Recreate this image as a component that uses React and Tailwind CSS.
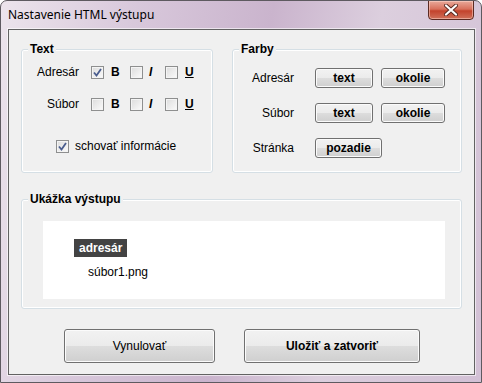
import React from "react";

function CheckBox({ checked }) {
  return (
    <div className="w-[13px] h-[13px] border border-[#8e8f8f] bg-gradient-to-br from-[#dcdcdc] to-[#fbfbfb] flex items-center justify-center shrink-0">
      <div className="w-[11px] h-[11px] border border-[#f4f4f4] flex items-center justify-center">
        {checked && (
          <svg width="9" height="9" viewBox="0 0 9 9">
            <path d="M1 4.5 L3.5 7.5 L8 1" fill="none" stroke="#4a5d8e" strokeWidth="1.8" />
          </svg>
        )}
      </div>
    </div>
  );
}

function Btn({ children, className = "", bold = true }) {
  return (
    <div
      className={`border border-[#707070] rounded-[3px] flex items-center justify-center text-[12px] text-black shadow-[inset_0_0_0_1px_#fbfbfb] bg-[linear-gradient(to_bottom,#f2f2f2_0%,#ebebeb_50%,#dddddd_51%,#cfcfcf_100%)] ${bold ? "font-bold" : ""} ${className}`}
    >
      {children}
    </div>
  );
}

function Group({ title, className = "", children }) {
  return (
    <div className={`relative border border-[#d5dfe5] rounded-[3px] shadow-[inset_0_0_0_1px_#ffffff] ${className}`}>
      <span className="absolute -top-[8px] left-[6px] px-[2px] bg-[#f0f0f0] text-[12px] leading-[14px] font-bold text-black">
        {title}
      </span>
      {children}
    </div>
  );
}

function StyleRow({ label, checks }) {
  return (
    <div className="flex items-center h-[16px]">
      <span className="w-[57px] text-right">{label}</span>
      <div className="flex items-center ml-[12px] w-[39px]">
        <CheckBox checked={checks[0]} />
        <span className="ml-[7px] font-bold">B</span>
      </div>
      <div className="flex items-center w-[35px]">
        <CheckBox checked={checks[1]} />
        <span className="ml-[6px] font-bold italic">I</span>
      </div>
      <div className="flex items-center">
        <CheckBox checked={checks[2]} />
        <span className="ml-[7px] font-bold underline">U</span>
      </div>
    </div>
  );
}

function ColorRow({ label, buttons }) {
  return (
    <div className="flex items-center h-[20px]">
      <span className="w-[61px] text-right">{label}</span>
      <div className="flex ml-[21px] gap-[8px]">
        {buttons.map((b) => (
          <Btn key={b.t} className={`h-[20px] ${b.w}`}>{b.t}</Btn>
        ))}
      </div>
    </div>
  );
}

export default function App() {
  return (
    <div className="w-[482px] h-[383px] flex flex-col border border-[#5e5a60] rounded-t-[7px] overflow-hidden bg-[linear-gradient(100deg,#ece4ec_0%,#d8c8db_25%,#cab4cd_50%,#dccfde_70%,#d2c0d5_100%)] font-['Liberation_Sans',Arial,sans-serif] text-[12px] text-black">
      {/* Title bar */}
      <div className="h-[28px] flex items-start justify-between shrink-0">
        <span className="ml-[7px] mt-[6px] text-[12px] leading-[16px] font-['Noto_Sans',sans-serif] text-black">
          Nastavenie HTML výstupu
        </span>
        <div className="mr-[7px] -mt-[1px] w-[46px] h-[20px] rounded-b-[4px] border border-[#5b2a22] bg-[linear-gradient(to_bottom,#e9a99a_0%,#d8705c_45%,#c3432c_55%,#d0705a_100%)] shadow-[inset_0_0_0_1px_rgba(255,220,210,0.5)] flex items-center justify-center">
          <svg width="14" height="12" viewBox="0 0 14 12">
            <path d="M2 1.5 L12 10.5 M12 1.5 L2 10.5" stroke="#5a2a22" strokeWidth="4" strokeLinecap="round" />
            <path d="M2 1.5 L12 10.5 M12 1.5 L2 10.5" stroke="#ffffff" strokeWidth="2.2" strokeLinecap="round" />
          </svg>
        </div>
      </div>

      {/* Client area */}
      <div className="ml-[7px] mr-[6px] mb-[7px] h-[346px] border border-[#626262] bg-[#f0f0f0] shadow-[0_0_0_1px_rgba(255,255,255,0.6)] flex flex-col pl-[12px] pt-[19px]">
        <div className="flex gap-[19px]">
          <Group title="Text" className="w-[192px] h-[124px] pt-[14px]">
            <div className="flex flex-col gap-[16px]">
              <StyleRow label="Adresár" checks={[true, false, false]} />
              <StyleRow label="Súbor" checks={[false, false, false]} />
            </div>
            <div className="flex items-center h-[16px] mt-[26px] pl-[34px]">
              <CheckBox checked />
              <span className="ml-[6px]">schovať informácie</span>
            </div>
          </Group>
          <Group title="Farby" className="w-[230px] h-[124px] pt-[18px] flex flex-col gap-[15px]">
            <ColorRow label="Adresár" buttons={[{ t: "text", w: "w-[58px]" }, { t: "okolie", w: "w-[64px]" }]} />
            <ColorRow label="Súbor" buttons={[{ t: "text", w: "w-[58px]" }, { t: "okolie", w: "w-[64px]" }]} />
            <ColorRow label="Stránka" buttons={[{ t: "pozadie", w: "w-[67px]" }]} />
          </Group>
        </div>

        <Group title="Ukážka výstupu" className="mt-[26px] w-[441px] h-[110px] pl-[21px] pt-[21px]">
          <div className="w-[402px] h-[78px] bg-white pt-[18px] pl-[31px]">
            <div className="inline-flex items-center h-[18px] px-[5px] bg-[#434343] text-white font-bold text-[12px]">
              adresár
            </div>
            <div className="ml-[14px] mt-[8px] leading-[14px]">súbor1.png</div>
          </div>
        </Group>

        <div className="flex gap-[29px] mt-[20px] ml-[43px]">
          <Btn bold={false} className="w-[151px] h-[34px]">Vynulovať</Btn>
          <Btn className="w-[176px] h-[34px]">Uložiť a zatvoriť</Btn>
        </div>
      </div>
    </div>
  );
}
